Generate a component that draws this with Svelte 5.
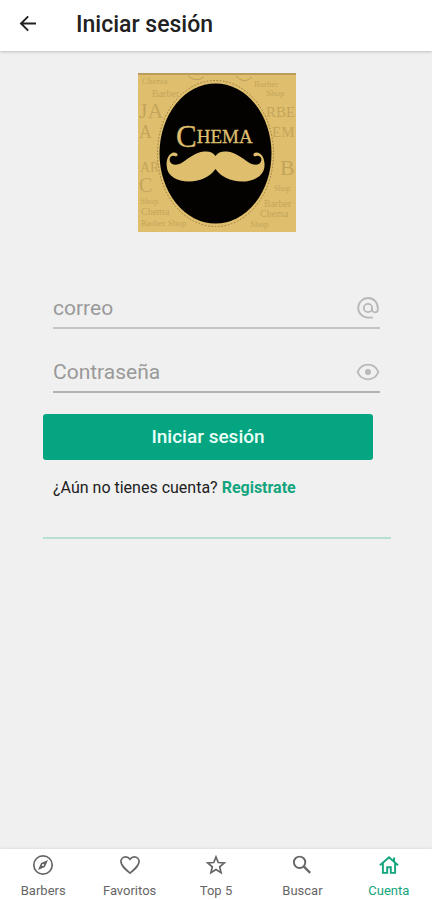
<script>
  let email = $state('');
  let password = $state('');

  const tabs = [
    { id: 'barbers', label: 'Barbers' },
    { id: 'favoritos', label: 'Favoritos' },
    { id: 'top', label: 'Top 5' },
    { id: 'buscar', label: 'Buscar' },
    { id: 'cuenta', label: 'Cuenta' }
  ];
  let active = $state('cuenta');

  // Faded words printed on the logo's paper background
  const words = [
    { t: 'Chema', x: 4, y: 11, s: 9 },
    { t: 'Barber', x: 14, y: 24, s: 10 },
    { t: 'JA', x: 1, y: 45, s: 22 },
    { t: 'A', x: 1, y: 65, s: 18 },
    { t: 'Barber', x: 116, y: 14, s: 9 },
    { t: 'Shop', x: 128, y: 23, s: 9 },
    { t: 'RBE', x: 128, y: 44, s: 15 },
    { t: 'EM', x: 134, y: 64, s: 15 },
    { t: 'AR', x: 2, y: 99, s: 14 },
    { t: 'C', x: 1, y: 119, s: 20 },
    { t: 'B', x: 142, y: 102, s: 22 },
    { t: 'Shop', x: 136, y: 118, s: 8 },
    { t: 'Shop', x: 2, y: 131, s: 9 },
    { t: 'Chema', x: 3, y: 142, s: 10 },
    { t: 'Barber Shop', x: 3, y: 153, s: 9 },
    { t: 'Barber', x: 126, y: 134, s: 10 },
    { t: 'Chema', x: 122, y: 144, s: 10 },
    { t: 'Shop', x: 112, y: 154, s: 9 }
  ];
</script>

<div class="screen">
  <header>
    <button class="back" aria-label="Volver">
      <svg viewBox="0 0 24 24" width="24" height="24" fill="none" stroke="currentColor" stroke-width="1.9">
        <path d="M20 10.500H5M12.200 3.300 5 10.500l7.200 7.200" />
      </svg>
    </button>
    <h1>Iniciar sesión</h1>
  </header>

  <main>
    <svg class="logo" viewBox="0 0 158 159" width="158" height="159" role="img" aria-label="Chema">
      <rect width="158" height="159" fill="#dfbf6e" />
      <g class="words">
        {#each words as w}
          <text x={w.x} y={w.y} font-size={w.s}>{w.t}</text>
        {/each}
      </g>
      <path d="M50 3q8 7 16 1M98 3q8 9 16 1" fill="none" stroke="#bfa05a" />
      <rect width="158" height="2" fill="#b99d5c" />
      <ellipse cx="77.500" cy="80.500" rx="59" ry="74" fill="#dfbf6e" />
      <ellipse cx="77.500" cy="80.500" rx="58" ry="73" fill="none" stroke="#92783d" stroke-width="1" stroke-dasharray="1.500 1.800" />
      <ellipse cx="77.500" cy="80.500" rx="56" ry="70" fill="#030200" />
      <text class="name" x="38" y="70"><tspan class="initial" dy="4">C</tspan><tspan dy="-4">HEMA</tspan></text>
      <path
        fill="#dfbf6e"
        d="M77.500 83C80 79 84 78 89 78.500C98 79.500 104 85 110 89C115 92.500 121 93 123 88.500C124.500 84.500 121 81.500 117 83.500C114 82.500 115.500 79.500 119 79.500C124 80 127 86 126.500 93C126 103 116 108.500 104 108.500C92 108 83 104 77.500 96C72 104 63 108 51 108.500C39 108.500 29 103 28.700 93C28 86 31 80 36 79.500C39.500 79.500 41 82.500 38 83.500C34 81.500 30.500 84.500 32 88.500C34 93 40 92.500 45 89C51 85 57 79.500 66 78.500C71 78 75 79 77.500 83Z"
      />
    </svg>

    <form onsubmit={(e) => e.preventDefault()}>
      <div class="field">
        <input type="email" aria-label="correo" placeholder="correo" bind:value={email} />
        <svg viewBox="0 0 24 24" width="24" height="24" fill="none" stroke="currentColor" stroke-width="1.8">
          <path d="M16.800 21.600H12A9.800 9.800 0 1 1 21.800 12v1.400a2.900 2.900 0 0 1-5.800 0V12" />
          <circle cx="12" cy="12" r="4.200" />
        </svg>
      </div>
      <div class="field second">
        <input type="password" aria-label="Contraseña" placeholder="Contraseña" bind:value={password} />
        <svg viewBox="0 0 24 24" width="24" height="24" fill="none" stroke="currentColor" stroke-width="1.8">
          <path d="M1.600 12C3.600 7.300 7.500 4.700 12 4.700S20.400 7.300 22.400 12C20.400 16.700 16.500 19.300 12 19.300S3.600 16.700 1.600 12Z" />
          <circle cx="12" cy="12" r="3" fill="currentColor" stroke="none" />
        </svg>
      </div>
      <button class="submit" type="submit">Iniciar sesión</button>
      <p>¿Aún no tienes cuenta? <a href="#registro">Registrate</a></p>
      <hr />
    </form>
  </main>

  <nav>
    {#each tabs as tab}
      <button class="tab" class:active={active === tab.id} onclick={() => (active = tab.id)}>
        <svg viewBox="0 0 24 24" width="24" height="24" fill="none" stroke="currentColor" stroke-width="1.7">
          {#if tab.id === 'barbers'}
            <circle cx="12" cy="12" r="9.200" />
            <path d="M17 7 13.900 13.900 7 17l3.100-6.900Z" fill="currentColor" stroke="none" />
            <circle cx="12" cy="12" r="1.100" fill="#fff" stroke="none" />
          {:else if tab.id === 'favoritos'}
            <path d="M12 20.200C6.500 15.400 2.900 12.400 2.900 8.600C2.900 5.900 5 3.900 7.600 3.900C9.400 3.900 11 4.800 12 6.200C13 4.800 14.600 3.900 16.400 3.900C19 3.900 21.100 5.900 21.100 8.600C21.100 12.400 17.500 15.400 12 20.200Z" />
          {:else if tab.id === 'top'}
            <path d="m12 4 2.300 5.500 6 .5-4.600 3.900 1.400 5.800-5.100-3.100-5.100 3.100 1.400-5.800L3.700 10l6-.5Z" />
          {:else if tab.id === 'buscar'}
            <circle cx="9.600" cy="9.300" r="5.700" stroke-width="1.9" />
            <path d="m13.900 13.600 6.300 6.300" stroke-width="2.2" />
          {:else}
            <path d="M3 12.300 12 4.200l9 8.100M5.900 10v9.900h4.300v-5.600h3.600v5.600h4.300V10M17.100 8.300V4.500" stroke-width="1.9" />
          {/if}
        </svg>
        <span>{tab.label}</span>
      </button>
    {/each}
  </nav>
</div>

<style>
  :global(body) {
    margin: 0;
    background: #f0f0f0;
  }
  .screen {
    min-height: 100vh;
    display: flex;
    flex-direction: column;
    background: #f0f0f0;
    color: #212121;
    font-family: Roboto, "Liberation Sans", sans-serif;
  }
  button {
    padding: 0;
    border: 0;
    background: none;
    color: inherit;
    font-family: inherit;
    cursor: pointer;
  }
  header {
    display: flex;
    align-items: center;
    gap: 36px;
    height: 50px;
    padding: 0 16px 1px;
    background: #fff;
    box-shadow: 0 1px 3px #0003;
  }
  .back {
    display: flex;
  }
  h1 {
    margin: 0;
    font-size: 23px;
    line-height: 28px;
    font-weight: 500;
  }
  main {
    flex: 1;
    display: flex;
    flex-direction: column;
    padding: 22px 41px 0 43px;
  }
  .logo {
    align-self: center;
  }
  .words {
    font-family: "Liberation Serif", serif;
    fill: #927634;
    opacity: 0.35;
  }
  .name {
    font-family: "Liberation Serif", serif;
    font-size: 19px;
    fill: #dfbf6e;
    stroke: #dfbf6e;
    stroke-width: 0.3px;
  }
  .initial {
    font-size: 31px;
  }
  form {
    display: flex;
    flex-direction: column;
    margin-top: 57px;
  }
  .field {
    display: flex;
    align-items: center;
    height: 38px;
    margin: 0 11px 0 10px;
    border-bottom: 2px solid #c2c4c5;
    color: #b8b8b8;
  }
  .second {
    margin-top: 24px;
    border-color: #b0b2b4;
  }
  input {
    flex: 1;
    min-width: 0;
    padding: 0;
    border: 0;
    outline: 0;
    background: none;
    color: #212121;
    font: 400 21px/28px Roboto, "Liberation Sans", sans-serif;
  }
  input::placeholder {
    color: #999;
    opacity: 1;
  }
  .submit {
    height: 46px;
    margin: 21px 18px 0 0;
    border-radius: 3px;
    background: #04a580;
    color: #e9fff9;
    font-size: 19px;
    line-height: 24px;
    font-weight: 500;
  }
  p {
    margin: 18px 10px 0;
    font-size: 16px;
    line-height: 20px;
  }
  a {
    color: #13a57e;
    font-weight: 700;
    text-decoration: none;
  }
  hr {
    width: 100%;
    height: 2px;
    margin: 39px 0 0;
    border: 0;
    background: #b6e0d3;
  }
  nav {
    display: flex;
    height: 51px;
    background: #fff;
    box-shadow: 0 -1px 3px #00000014;
  }
  .tab {
    flex: 1;
    display: flex;
    flex-direction: column;
    align-items: center;
    gap: 6px;
    padding-top: 4px;
    color: #666;
    font-size: 13px;
    line-height: 16px;
  }
  .tab svg {
    flex: none;
  }
  .active {
    color: #13a57e;
  }
</style>
